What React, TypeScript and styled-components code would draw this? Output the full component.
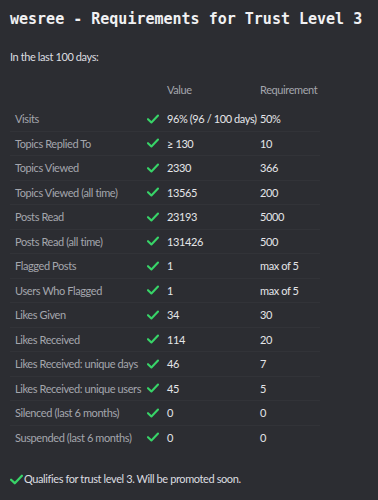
import styled, { createGlobalStyle } from 'styled-components';

const GlobalStyle = createGlobalStyle`
    html, body {
        margin: 0;
        background: #2c2d32;
    }
`;

const Page = styled.div`
    width: 378px;
    height: 500px;
    box-sizing: border-box;
    padding: 9px 10px 0 10px;
    background: #2c2d32;
    font-family: Lato, "Open Sans", sans-serif;
    font-size: 11px;
    letter-spacing: -0.4px;
    color: #dcdde0;
    overflow: hidden;
`;

const Title = styled.h1`
    margin: 0;
    font-family: "DejaVu Sans Mono", monospace;
    font-weight: bold;
    font-size: 15px;
    line-height: 20px;
    letter-spacing: 0;
    color: #f1f1f3;
    white-space: nowrap;
`;

const Intro = styled.p`
    margin: 20px 0 0 0;
    line-height: 16px;
`;

const Table = styled.table`
    margin-top: 12px;
    width: 310px;
    table-layout: fixed;
    border-collapse: collapse;
`;

const HeadCell = styled.th`
    text-align: left;
    font-weight: normal;
    color: #a4a6ad;
    height: 24px;
    padding: 6px 0 0 0;
    vertical-align: top;
`;

const Row = styled.tr<{ $last?: boolean }>`
    border-bottom: 1px solid ${p => (p.$last ? 'transparent' : '#323338')};
`;

const Cell = styled.td<{ $muted?: boolean }>`
    height: 23.5px;
    padding: 0;
    color: ${p => (p.$muted ? '#a4a6ad' : '#e4e5e8')};
    white-space: nowrap;
`;

const LabelCell = styled(Cell)`
    padding-left: 5px;
`;

const CheckCell = styled(Cell)`
    padding-left: 2px;
`;

const Check = ({ size = 12 }: { size?: number }) => (
    <svg width={size} height={size} viewBox="0 0 12 12" style={{ display: 'block' }}>
        <path d="M1 6.2 L4.4 9.4 L11 2.6" fill="none" stroke="#38d468" strokeWidth="2.1" strokeLinecap="round" strokeLinejoin="round" />
    </svg>
);

const Footer = styled.div`
    margin-top: 21px;
    display: flex;
    align-items: center;
    gap: 1px;
    line-height: 16px;
`;

const rows: [string, string, string][] = [
    ['Visits', '96% (96 / 100 days)', '50%'],
    ['Topics Replied To', '≥ 130', '10'],
    ['Topics Viewed', '2330', '366'],
    ['Topics Viewed (all time)', '13565', '200'],
    ['Posts Read', '23193', '5000'],
    ['Posts Read (all time)', '131426', '500'],
    ['Flagged Posts', '1', 'max of 5'],
    ['Users Who Flagged', '1', 'max of 5'],
    ['Likes Given', '34', '30'],
    ['Likes Received', '114', '20'],
    ['Likes Received: unique days', '46', '7'],
    ['Likes Received: unique users', '45', '5'],
    ['Silenced (last 6 months)', '0', '0'],
    ['Suspended (last 6 months)', '0', '0'],
];

export default function App() {
    return (
        <>
            <GlobalStyle />
            <Page>
                <Title>wesree - Requirements for Trust Level 3</Title>
                <Intro>In the last 100 days:</Intro>
                <Table>
                    <colgroup>
                        <col style={{ width: 135 }} />
                        <col style={{ width: 22 }} />
                        <col style={{ width: 93 }} />
                        <col />
                    </colgroup>
                    <thead>
                        <tr>
                            <HeadCell />
                            <HeadCell />
                            <HeadCell>Value</HeadCell>
                            <HeadCell>Requirement</HeadCell>
                        </tr>
                    </thead>
                    <tbody>
                        {rows.map(([label, value, req], i) => (
                            <Row key={label} $last={i === rows.length - 1}>
                                <LabelCell $muted>{label}</LabelCell>
                                <CheckCell><Check /></CheckCell>
                                <Cell>{value}</Cell>
                                <Cell>{req}</Cell>
                            </Row>
                        ))}
                    </tbody>
                </Table>
                <Footer>
                    <Check size={13} />
                    <span>Qualifies for trust level 3. Will be promoted soon.</span>
                </Footer>
            </Page>
        </>
    );
}
